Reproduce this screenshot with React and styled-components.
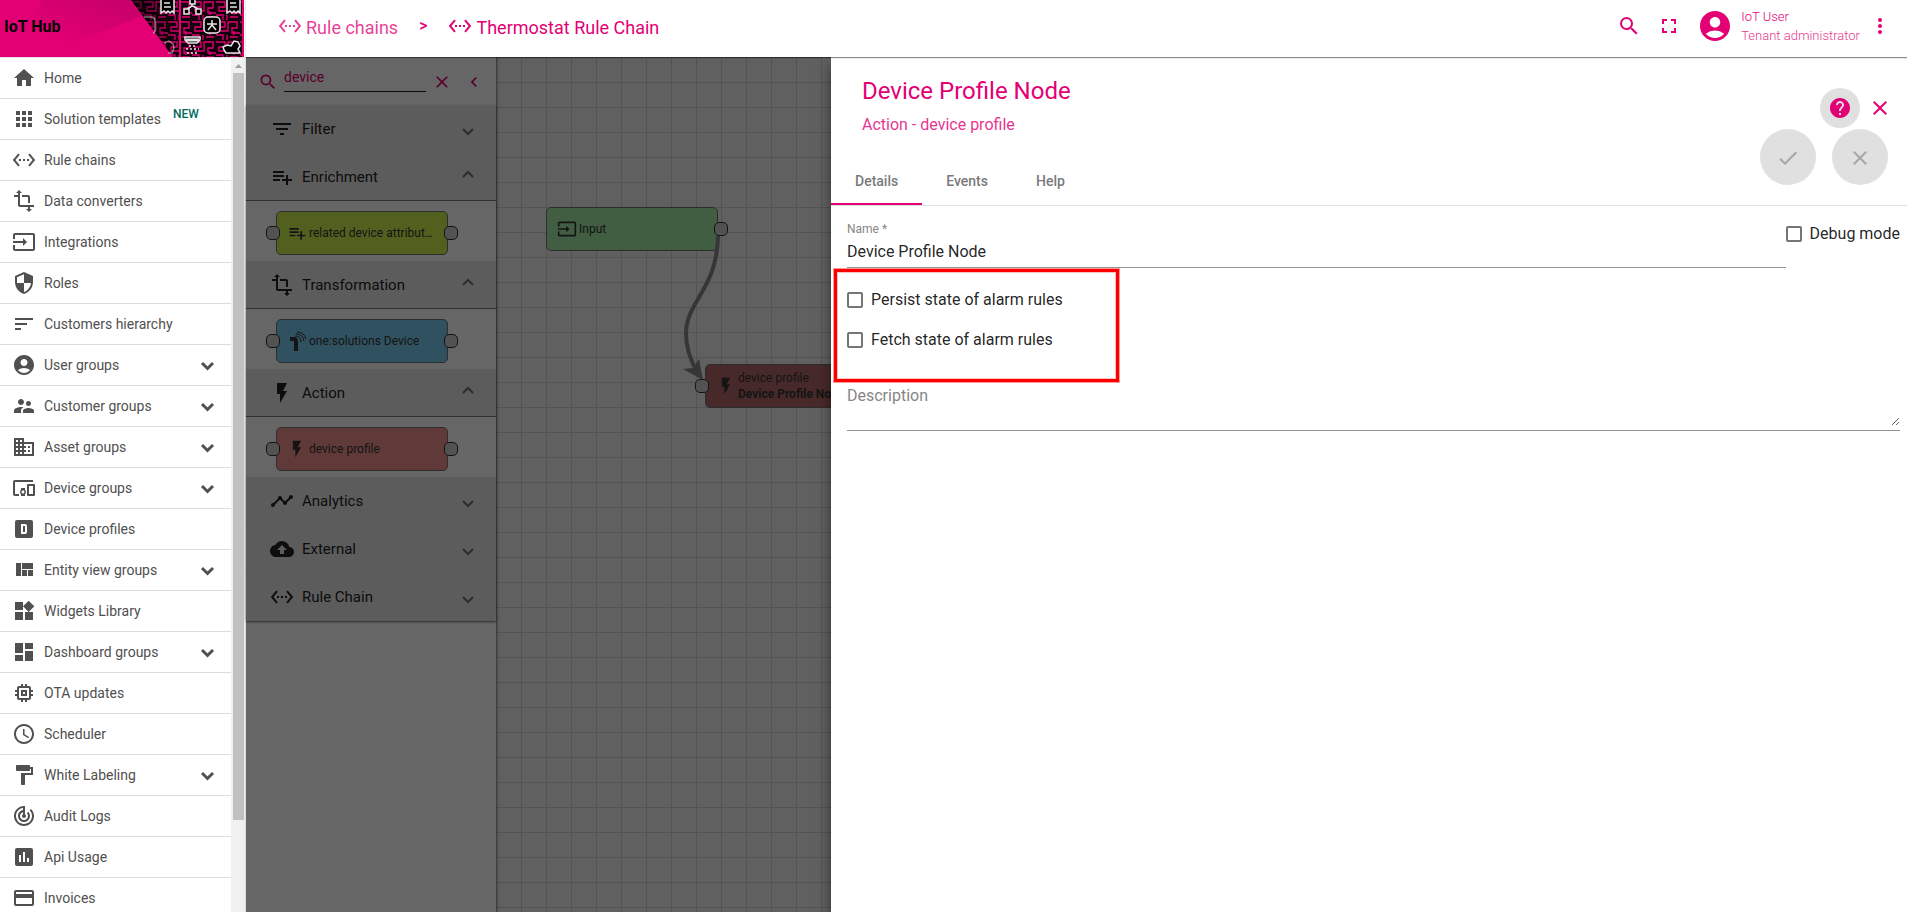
import React from 'react';
import styled, { createGlobalStyle } from 'styled-components';
import {
  MdHome, MdApps, MdSettingsEthernet, MdTransform, MdInput, MdSecurity, MdSort, MdAccountCircle,
  MdSupervisorAccount, MdDomain, MdDevicesOther, MdMemory, MdSchedule, MdFormatPaint,
  MdTrackChanges, MdInsertChart, MdPayment, MdSearch, MdFullscreen, MdMoreVert, MdClose,
  MdChevronLeft, MdFilterList, MdPlaylistAdd, MdFlashOn, MdTimeline, MdCloudUpload, MdHelp,
  MdCheck, MdDashboard, MdWidgets,
} from 'react-icons/md';

const pink = '#e20074';

const GlobalStyle = createGlobalStyle`
  * { box-sizing: border-box; }
  body { margin: 0; font-family: Roboto, "Liberation Sans", sans-serif; color: rgba(0, 0, 0, 0.87); background: #fff; }
  button, input, textarea { font: inherit; color: inherit; }
  button { border: 0; padding: 0; background: none; cursor: pointer; }
  a { color: inherit; text-decoration: none; }
  svg { display: block; flex: none; }
`;

const Page = styled.div`
  display: grid;
  grid-template-columns: 246px minmax(0, 1fr);
  height: 100vh;
  overflow: hidden;
`;

/* ---------- sidebar ---------- */

const Sidebar = styled.aside`
  display: flex;
  flex-direction: column;
  min-height: 0;
`;

const Brand = styled.a`
  display: grid;
  height: 57px;
  margin-right: 2px;
  color: #000;
  font-size: 16px;
  font-weight: 700;
  & > * { grid-area: 1 / 1; }
  & > svg { width: 100%; height: 57px; }
  & > span { align-self: center; padding: 0 0 5px 4px; z-index: 1; }
`;

const MenuArea = styled.div`
  display: grid;
  grid-template-columns: minmax(0, 1fr) 15px;
  flex: 1;
  min-height: 0;
  border-top: 1px solid #e0e0e0;
`;

const Menu = styled.nav`
  overflow: hidden;
`;

const MenuLink = styled.a`
  display: flex;
  align-items: center;
  gap: 8px;
  height: 41px;
  padding: 0 12px;
  border-bottom: 1px solid #dcdcdc;
  color: #505050;
  font-size: 14px;
  & > svg:last-child:not(:first-child) { margin-left: auto; }
`;

const NewTag = styled.span`
  padding: 0 0 10px 4px;
  color: #00695c;
  font-size: 12px;
  font-weight: 500;
`;

const ScrollTrack = styled.div`
  display: flex;
  flex-direction: column;
  align-items: center;
  background: #f1f1f1;
`;

const ScrollArrow = styled.svg`
  width: 15px;
  height: 15px;
  fill: #a0a0a0;
`;

const ScrollRail = styled.div`
  flex: 1;
  width: 11px;
`;

const ScrollThumb = styled.div`
  height: 89%;
  background: #c1c1c1;
`;

/* ---------- top bar ---------- */

const Main = styled.div`
  display: flex;
  flex-direction: column;
  min-width: 0;
  min-height: 0;
`;

const TopBar = styled.header`
  position: relative;
  z-index: 3;
  display: flex;
  align-items: center;
  justify-content: space-between;
  height: 57px;
  padding: 0 7px 5px 32px;
  background: #fff;
  color: ${pink};
  box-shadow: 0 1px 1px rgba(0, 0, 0, 0.45);
`;

const Crumbs = styled.nav`
  display: flex;
  align-items: center;
  gap: 21px;
  font-size: 18px;
`;

const Crumb = styled.a`
  display: flex;
  align-items: center;
  gap: 4px;
  opacity: ${(p) => (p.$muted ? 0.75 : 1)};
`;

const CrumbText = styled.span`
  padding-top: 2px;
`;

const CrumbMark = styled.span`
  padding-bottom: 2px;
  font-size: 16px;
  font-weight: 500;
`;

const TopActions = styled.div`
  display: flex;
  align-items: center;
`;

const IconButton = styled.button`
  display: grid;
  place-items: center;
  width: ${(p) => p.$size || 40}px;
  height: ${(p) => p.$size || 40}px;
  border-radius: 50%;
  color: ${pink};
  background: ${(p) => (p.$filled ? '#e0e0e0' : 'none')};
`;

const User = styled.div`
  display: flex;
  align-items: center;
  gap: 8px;
  margin-left: 8px;
  color: ${pink};
`;

const UserText = styled.div`
  display: flex;
  flex-direction: column;
  font-size: 13px;
  font-weight: 300;
  line-height: 19px;
`;

const UserRole = styled.span`
  opacity: 0.8;
`;

/* ---------- rule chain editor ---------- */

const Editor = styled.main`
  position: relative;
  display: grid;
  grid-template-columns: 250px minmax(0, 1fr);
  flex: 1;
  min-height: 0;
`;

const Palette = styled.section`
  z-index: 1;
  background: #fff;
  box-shadow: 1px 0 3px rgba(0, 0, 0, 0.4);
`;

const SearchBar = styled.div`
  display: flex;
  align-items: center;
  height: 48px;
  padding: 2px 6px 0 12px;
  color: ${pink};
`;

const SearchInput = styled.input`
  width: 142px;
  height: 30px;
  margin: 0 6px 10px 6px;
  padding: 0;
  border: 0;
  border-bottom: 1px solid #222;
  outline: 0;
  background: none;
  font-size: 14px;
  flex: none;
`;

const CollapseButton = styled(IconButton)`
  margin-left: auto;
`;

const Groups = styled.div`
  box-shadow: 0 1px 2px rgba(0, 0, 0, 0.6);
`;

const GroupHead = styled.button`
  display: flex;
  align-items: center;
  gap: 8px;
  width: 100%;
  height: 48px;
  padding: 1px 22px 0 24px;
  background: #e6e6e6;
  border-bottom: 1px solid ${(p) => (p.$open ? '#777' : '#dfdfdf')};
  font-size: 15px;
  color: #222;
`;

const GroupArrow = styled.svg`
  margin-left: auto;
  width: 12px;
  height: 8px;
  margin-top: ${(p) => (p.$open ? '-6px' : '6px')};
  transform: ${(p) => (p.$open ? 'scaleY(-1)' : 'none')};
  fill: none;
  stroke: #707070;
  stroke-width: 2;
`;

const GroupBody = styled.div`
  height: 60px;
  padding: 10px 0 0 30px;
`;

const NodeBox = styled.div`
  position: relative;
  display: flex;
  align-items: center;
  gap: 2px;
  width: 172px;
  height: 44px;
  padding: 0 10px 0 10px;
  border: 1px solid #707070;
  border-radius: 5px;
  background: ${(p) => p.$color};
  color: #333;
  font-size: 12px;
  line-height: 16px;
`;

const NodeText = styled.div`
  min-width: 0;
  overflow: hidden;
  text-overflow: ellipsis;
  white-space: nowrap;
`;

const Port = styled.i`
  position: absolute;
  top: 14px;
  ${(p) => p.$side}: -11px;
  width: 14px;
  height: 14px;
  border: 1px solid #333;
  border-radius: 5px;
  background: #ccc;
`;

const Canvas = styled.section`
  position: relative;
  overflow: hidden;
  background-color: #f0f0f0;
  background-image:
    linear-gradient(to right, #d0d0d0 1px, transparent 1px),
    linear-gradient(to bottom, #d0d0d0 1px, transparent 1px);
  background-size: 25px 25px;
`;

const Placed = styled.div`
  position: absolute;
  left: ${(p) => p.$x}px;
  top: ${(p) => p.$y}px;
`;

const Wire = styled.svg`
  position: absolute;
  left: 0;
  top: 0;
  width: 400px;
  height: 400px;
`;

const Backdrop = styled.div`
  position: absolute;
  inset: 0;
  z-index: 1;
  background: rgba(0, 0, 0, 0.6);
`;

/* ---------- details drawer ---------- */

const Drawer = styled.section`
  position: absolute;
  inset: 0 0 0 585px;
  z-index: 2;
  background: #fff;
  box-shadow: 0 8px 12px rgba(0, 0, 0, 0.5);
`;

const DrawerHead = styled.header`
  display: flex;
  justify-content: space-between;
  height: 100px;
  padding: 20px 7px 0 31px;
  color: ${pink};
`;

const DrawerTitle = styled.h1`
  margin: 0;
  font-size: 24px;
  font-weight: 400;
  line-height: 28px;
`;

const DrawerSubtitle = styled.p`
  margin: 8px 0 0;
  font-size: 16px;
  line-height: 24px;
  opacity: 0.8;
`;

const DrawerTools = styled.div`
  display: flex;
  padding-top: 11px;
`;

const FabRow = styled.div`
  position: absolute;
  top: 72px;
  right: 19px;
  display: flex;
  gap: 16px;
`;

const Fab = styled.button`
  display: grid;
  place-items: center;
  width: 56px;
  height: 56px;
  padding-top: 2px;
  border-radius: 50%;
  background: #e0e0e0;
  color: #a6a6a6;
`;

const Tabs = styled.div`
  display: flex;
  border-bottom: 1px solid #e0e0e0;
`;

const Tab = styled.button`
  height: 48px;
  padding: 2px 24px 0;
  border-bottom: 2px solid ${(p) => (p.$active ? pink : 'transparent')};
  color: #7a7a7a;
  font-size: 14px;
  font-weight: 500;
`;

const Form = styled.form`
  padding: 16px 7px 0 16px;
  font-size: 16px;
`;

const NameRow = styled.div`
  display: flex;
  align-items: flex-start;
`;

const Field = styled.div`
  display: flex;
  flex-direction: column;
  flex: 1;
`;

const SmallLabel = styled.label`
  font-size: 12px;
  line-height: 14px;
  color: #868686;
`;

const NameInput = styled.input`
  height: 32px;
  padding: 0;
  border: 0;
  border-bottom: 1px solid #949494;
  outline: 0;
  background: none;
`;

const CheckLabel = styled.label`
  display: flex;
  align-items: center;
  gap: 8px;
  height: 24px;
  & > span { padding-bottom: 2px; }
`;

const Tick = styled.input`
  appearance: none;
  flex: none;
  width: 16px;
  height: 16px;
  margin: 0;
  border: 2px solid #757575;
  border-radius: 2px;
`;

const AlarmOptions = styled.fieldset`
  position: relative;
  display: flex;
  flex-direction: column;
  align-items: flex-start;
  gap: 16px;
  margin: 0;
  padding: 20px 0 34px;
  border: 0;
`;

const Highlight = styled.div`
  position: absolute;
  left: -13px;
  top: 1px;
  width: 285px;
  height: 113px;
  border: 3px solid #f00;
  box-shadow: 0 0 0 1px rgba(255, 0, 0, 0.4), inset 0 0 0 1px rgba(255, 0, 0, 0.25);
  pointer-events: none;
`;

const AreaLabel = styled.label`
  line-height: 20px;
  color: #868686;
`;

const Area = styled.textarea`
  height: 20px;
  padding: 0;
  border: 0;
  outline: 0;
  resize: vertical;
  background: none;
`;

const AreaField = styled(Field)`
  padding-bottom: 4px;
  border-bottom: 1px solid #949494;
`;

/* ---------- drawings ---------- */

const Glyph = ({ d, size = 24 }) => (
  <svg width={size} height={size} viewBox="0 0 24 24" fill="currentColor" fillRule="evenodd" aria-hidden="true">
    <path d={d} />
  </svg>
);

const LetterBox = () => (
  <Glyph d="M9 7h4a2 2 0 0 1 2 2v6a2 2 0 0 1-2 2H9V7m2 2v6h2V9h-2M5 3h14a2 2 0 0 1 2 2v14a2 2 0 0 1-2 2H5a2 2 0 0 1-2-2V5a2 2 0 0 1 2-2z" />
);
const Quilt = () => <Glyph d="M10 18h5v-6h-5v6zm-6 0h5V5H4v13zm12 0h5v-6h-5v6zM10 5v6h11V5H10z" />;

const Beacon = () => (
  <svg width="20" height="20" viewBox="0 0 20 20" fill="none" stroke="currentColor" aria-hidden="true">
    <path d="M3 8h4q2 0 2 3v9" strokeWidth="4" />
    <path d="M8 5q6 0 6 6M9 3q7 0 8 7M10 1q7 0 9 7" strokeWidth="1" />
  </svg>
);

const MenuArrow = () => (
  <svg width="24" height="24" viewBox="0 0 24 24" fill="none" stroke="currentColor" strokeWidth="3" aria-hidden="true">
    <path d="M7 10l5.500 5.500L18 10" />
  </svg>
);

const BrandArt = () => (
  <svg viewBox="0 0 244 57" preserveAspectRatio="none" aria-hidden="true">
    <defs>
      <linearGradient id="fade" x1="0" x2="1" y1="0" y2="0">
        <stop offset="0" stopColor="#000" stopOpacity="0.6" />
        <stop offset="1" stopColor="#000" stopOpacity="0" />
      </linearGradient>
      <linearGradient id="shade" x1="0" x2="1" y1="1" y2="0">
        <stop offset="0.300" stopColor="#a00058" stopOpacity="0" />
        <stop offset="1" stopColor="#a00058" stopOpacity="0.450" />
      </linearGradient>
      <pattern id="maze" width="24" height="20" patternUnits="userSpaceOnUse">
        <rect width="24" height="20" fill="#14000c" />
        <path d="M0 2h9v5H3v4h9V2h9v6h-5v5h8M0 15h7v5M11 15v5M14 17h8M18 11v4" fill="none" stroke={pink} strokeWidth="1.300" />
      </pattern>
    </defs>
    <rect width="244" height="57" fill={pink} />
    <path d="M42 0h88l11 16L60 49 20 57z" fill="url(#shade)" />
    <path d="M131 0h113v57h-71z" fill="url(#maze)" />
    <path d="M131 0h50v57h-8z" fill="url(#fade)" />
    <path d="M180 0v57M243 0v57" stroke={pink} strokeWidth="2" />
    <g fill="#000" stroke="#e8e8e8" strokeWidth="1.500">
      <path d="M161 -1h13v14l-2-2-2 2-2-2-2 2-2-2-3 2z" />
      <path d="M227 -1h13v14l-2-2-2 2-2-2-2 2-2-2-3 2z" />
      <path d="M164 3h6M164 7h7M230 3h6M230 7h7" fill="none" />
      <path d="M190 -1h5v5h-5zM184 9h5v5h-5zM196 9h5v5h-5zM192 4v3M192 6l-5 3M193 6l5 3" />
      <rect x="204" y="17" width="16" height="16" rx="4" />
      <path d="M212 20v5M207 24h10M212 25l-4 5M212 25l4 5" fill="none" />
      <path d="M144 17h8q3 1 3 4v8q0 4-2 4" fill="none" opacity="0.500" />
      <path d="M185 37h15v3l-3 3h-9l-3-3z" />
      <path d="M186 40h13" strokeWidth="3" fill="none" />
      <path d="M189 46h7M186 49h13M187 53h11" fill="none" strokeDasharray="2 2" />
      <path d="M224 50l-1-3 4-2 4 1 3-5 4 1 2 4-2 3 2 4h-14z" />
      <path d="M164 43l5-2 4 3 1 4-2 5h-4" fill="none" opacity="0.500" />
    </g>
  </svg>
);

const menu = [
  ['Home', MdHome], ['Solution templates', MdApps, 'new'], ['Rule chains', MdSettingsEthernet],
  ['Data converters', MdTransform], ['Integrations', MdInput], ['Roles', MdSecurity],
  ['Customers hierarchy', MdSort], ['User groups', MdAccountCircle, 'more'],
  ['Customer groups', MdSupervisorAccount, 'more'], ['Asset groups', MdDomain, 'more'],
  ['Device groups', MdDevicesOther, 'more'], ['Device profiles', LetterBox],
  ['Entity view groups', Quilt, 'more'], ['Widgets Library', MdWidgets],
  ['Dashboard groups', MdDashboard, 'more'], ['OTA updates', MdMemory], ['Scheduler', MdSchedule],
  ['White Labeling', MdFormatPaint, 'more'], ['Audit Logs', MdTrackChanges],
  ['Api Usage', MdInsertChart], ['Invoices', MdPayment],
];

const groups = [
  { name: 'Filter', Icon: MdFilterList },
  { name: 'Enrichment', Icon: MdPlaylistAdd, node: { text: 'related device attributes', Icon: MdPlaylistAdd, color: '#cdf14e' } },
  { name: 'Transformation', Icon: MdTransform, node: { text: 'one:solutions Device', Icon: Beacon, color: '#79cef1' } },
  { name: 'Action', Icon: MdFlashOn, node: { text: 'device profile', Icon: MdFlashOn, color: '#f1928f' } },
  { name: 'Analytics', Icon: MdTimeline },
  { name: 'External', Icon: MdCloudUpload },
  { name: 'Rule Chain', Icon: MdSettingsEthernet },
];

const RuleNode = ({ Icon, color, ports, children }) => (
  <NodeBox $color={color}>
    <Icon size={20} />
    <NodeText>{children}</NodeText>
    {ports.map((side) => <Port key={side} $side={side} />)}
  </NodeBox>
);

const Check = ({ children }) => (
  <CheckLabel><Tick type="checkbox" /><span>{children}</span></CheckLabel>
);

export default function App() {
  return (
    <Page>
      <GlobalStyle />
      <Sidebar>
        <Brand href="#home"><BrandArt /><span>IoT Hub</span></Brand>
        <MenuArea>
          <Menu>
            {menu.map(([name, Icon, extra]) => (
              <MenuLink key={name} href="#menu">
                <Icon size={24} />
                <span>{name}</span>
                {extra === 'new' && <NewTag>NEW</NewTag>}
                {extra === 'more' && <MenuArrow />}
              </MenuLink>
            ))}
          </Menu>
          <ScrollTrack>
            <ScrollArrow viewBox="0 0 15 15"><path d="M4 10l3.500-4 3.500 4z" /></ScrollArrow>
            <ScrollRail><ScrollThumb /></ScrollRail>
          </ScrollTrack>
        </MenuArea>
      </Sidebar>

      <Main>
        <TopBar>
          <Crumbs>
            <Crumb href="#chains" $muted><MdSettingsEthernet size={24} /><CrumbText>Rule chains</CrumbText></Crumb>
            <CrumbMark>&gt;</CrumbMark>
            <Crumb href="#chain"><MdSettingsEthernet size={24} /><CrumbText>Thermostat Rule Chain</CrumbText></Crumb>
          </Crumbs>
          <TopActions>
            <IconButton aria-label="Search"><MdSearch size={24} /></IconButton>
            <IconButton aria-label="Fullscreen"><MdFullscreen size={24} /></IconButton>
            <User>
              <MdAccountCircle size={36} />
              <UserText><span>IoT User</span><UserRole>Tenant administrator</UserRole></UserText>
            </User>
            <IconButton aria-label="More"><MdMoreVert size={24} /></IconButton>
          </TopActions>
        </TopBar>

        <Editor>
          <Palette>
            <SearchBar>
              <MdSearch size={20} />
              <SearchInput aria-label="Search nodes" defaultValue="device" />
              <IconButton $size={20} aria-label="Clear"><MdClose size={20} /></IconButton>
              <CollapseButton $size={32} aria-label="Collapse"><MdChevronLeft size={20} /></CollapseButton>
            </SearchBar>
            <Groups>
              {groups.map(({ name, Icon, node }) => (
                <React.Fragment key={name}>
                  <GroupHead $open={!!node}>
                    <Icon size={24} />
                    <span>{name}</span>
                    <GroupArrow $open={!!node} viewBox="0 0 12 8"><path d="M1 1l5 5 5-5" /></GroupArrow>
                  </GroupHead>
                  {node && (
                    <GroupBody>
                      <RuleNode Icon={node.Icon} color={node.color} ports={['left', 'right']}>{node.text}</RuleNode>
                    </GroupBody>
                  )}
                </React.Fragment>
              ))}
            </Groups>
          </Palette>

          <Canvas>
            <Placed $x={50} $y={150}>
              <RuleNode Icon={MdInput} color="#a3eaa9" ports={['right']}>Input</RuleNode>
            </Placed>
            <Wire viewBox="0 0 400 400" fill="none">
              <path d="M222 179C221 233 190 244 190 277C190 291 195 304 201 315" stroke="#888" strokeWidth="4" />
              <path d="M207 323L187 312L197 311L203 302z" fill="#888" />
            </Wire>
            <Placed $x={209} $y={307}>
              <RuleNode Icon={MdFlashOn} color="#b46868" ports={['left']}>
                device profile<br /><b>Device Profile Node</b>
              </RuleNode>
            </Placed>
          </Canvas>

          <Backdrop />

          <Drawer>
            <DrawerHead>
              <div>
                <DrawerTitle>Device Profile Node</DrawerTitle>
                <DrawerSubtitle>Action - device profile</DrawerSubtitle>
              </div>
              <DrawerTools>
                <IconButton $filled aria-label="Help"><MdHelp size={24} /></IconButton>
                <IconButton aria-label="Close"><MdClose size={24} /></IconButton>
              </DrawerTools>
            </DrawerHead>
            <Tabs>
              <Tab $active>Details</Tab>
              <Tab>Events</Tab>
              <Tab>Help</Tab>
            </Tabs>
            <FabRow>
              <Fab aria-label="Apply"><MdCheck size={24} /></Fab>
              <Fab aria-label="Discard"><MdClose size={24} /></Fab>
            </FabRow>
            <Form>
              <NameRow>
                <Field>
                  <SmallLabel htmlFor="node-name">Name *</SmallLabel>
                  <NameInput id="node-name" defaultValue="Device Profile Node" />
                </Field>
                <Check>Debug mode</Check>
              </NameRow>
              <AlarmOptions>
                <Check>Persist state of alarm rules</Check>
                <Check>Fetch state of alarm rules</Check>
                <Highlight />
              </AlarmOptions>
              <AreaField>
                <AreaLabel htmlFor="node-description">Description</AreaLabel>
                <Area id="node-description" />
              </AreaField>
            </Form>
          </Drawer>
        </Editor>
      </Main>
    </Page>
  );
}
